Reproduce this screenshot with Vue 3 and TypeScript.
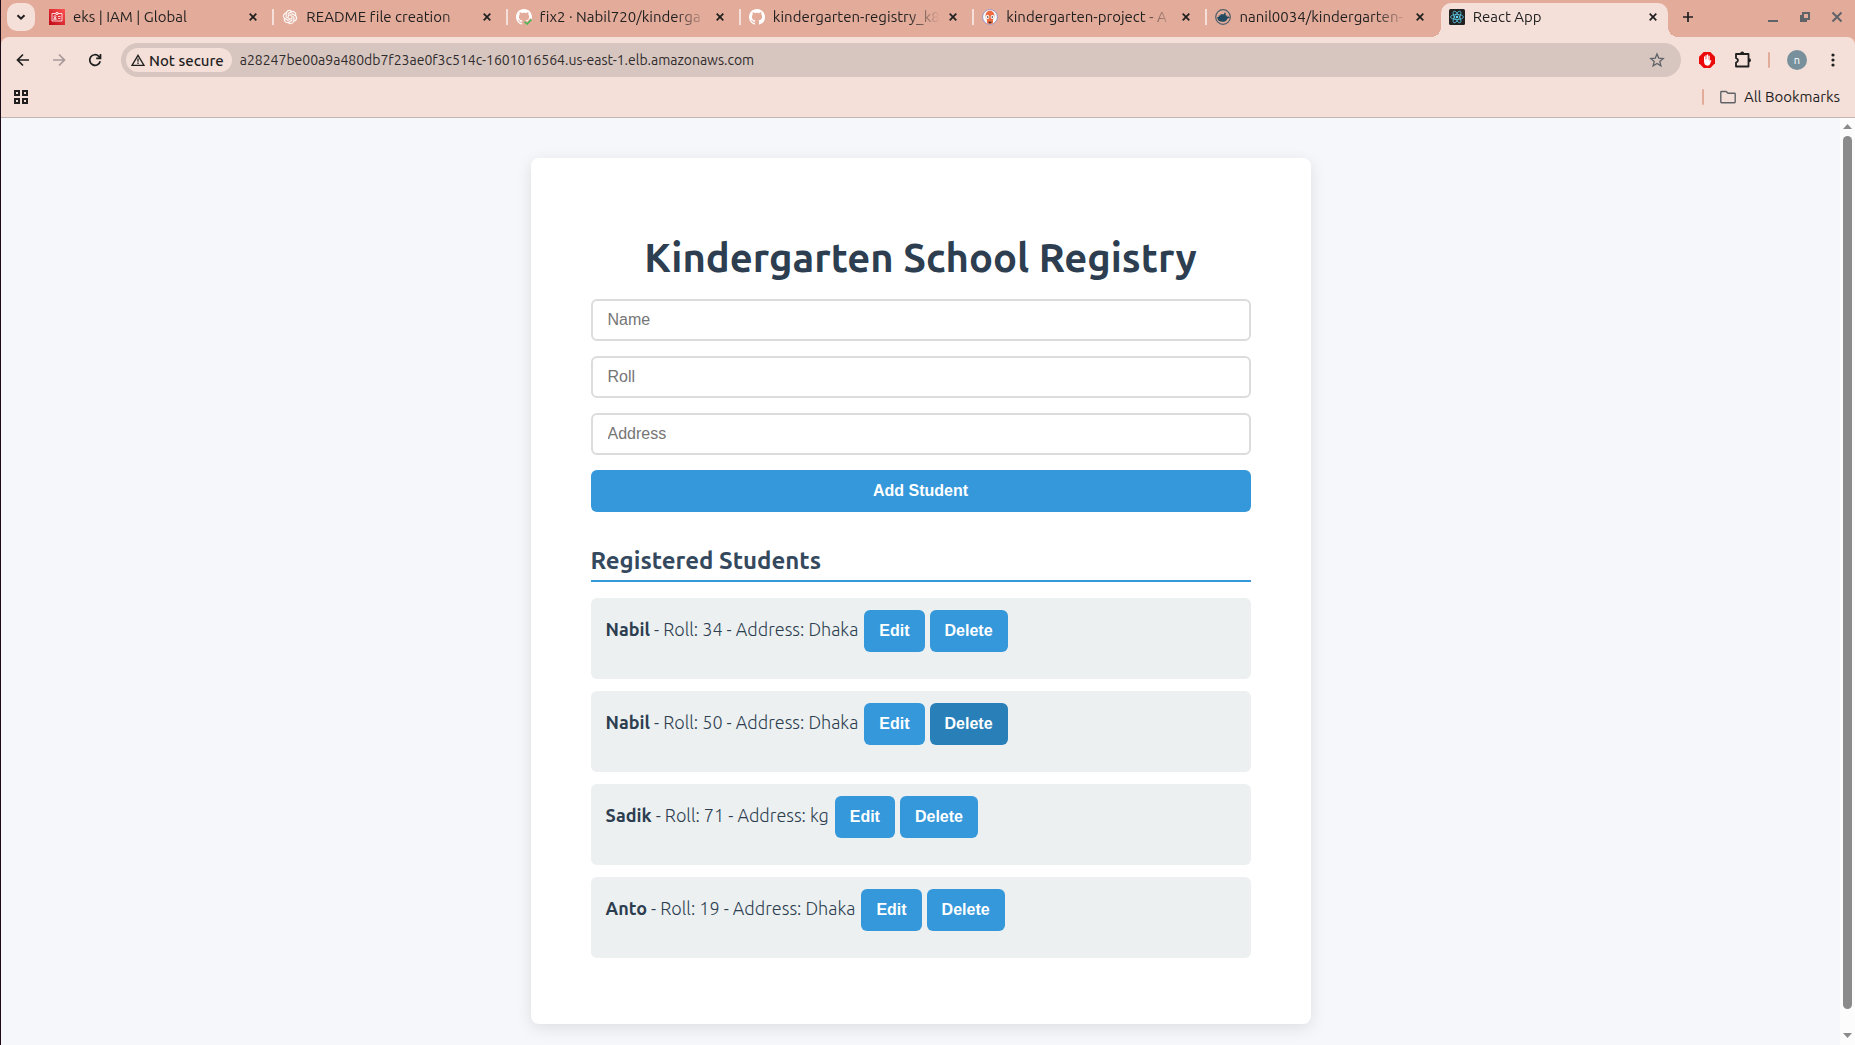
<script setup lang="ts">
import { ref } from 'vue'

interface Tab {
  title: string
  icon: 'iam' | 'openai' | 'github-ok' | 'github' | 'argo' | 'docker' | 'react'
  active?: boolean
}

interface Student {
  name: string
  roll: number
  address: string
  pressed?: boolean
}

const tabs: Tab[] = [
  { title: 'eks | IAM | Global', icon: 'iam' },
  { title: 'README file creation', icon: 'openai' },
  { title: 'fix2 · Nabil720/kinderga', icon: 'github-ok' },
  { title: 'kindergarten-registry_k8', icon: 'github' },
  { title: 'kindergarten-project - A', icon: 'argo' },
  { title: 'nanil0034/kindergarten-', icon: 'docker' },
  { title: 'React App', icon: 'react', active: true },
]

const url = ref('a28247be00a9a480db7f23ae0f3c514c-1601016564.us-east-1.elb.amazonaws.com')
const name = ref('')
const roll = ref('')
const address = ref('')

const students = ref<Student[]>([
  { name: 'Nabil', roll: 34, address: 'Dhaka' },
  { name: 'Nabil', roll: 50, address: 'Dhaka', pressed: true },
  { name: 'Sadik', roll: 71, address: 'kg' },
  { name: 'Anto', roll: 19, address: 'Dhaka' },
])

const octocat =
  'M8 0C3.58 0 0 3.58 0 8c0 3.54 2.29 6.53 5.47 7.59.4.07.55-.17.55-.38 0-.19-.01-.82-.01-1.49-2.01.37-2.53-.49-2.69-.94-.09-.23-.48-.94-.82-1.13-.28-.15-.68-.52-.01-.53.63-.01 1.08.58 1.23.82.72 1.21 1.87.87 2.33.66.07-.52.28-.87.51-1.07-1.78-.2-3.64-.89-3.64-3.95 0-.87.31-1.59.82-2.15-.08-.2-.36-1.02.08-2.12 0 0 .67-.21 2.2.82.64-.18 1.32-.27 2-.27.68 0 1.36.09 2 .27 1.53-1.04 2.2-.82 2.2-.82.44 1.1.16 1.92.08 2.12.51.56.82 1.27.82 2.15 0 3.07-1.87 3.75-3.65 3.95.29.25.54.73.54 1.48 0 1.07-.01 1.93-.01 2.2 0 .21.15.46.55.38A8.013 8.013 0 0016 8c0-4.42-3.58-8-8-8z'
const knot =
  'M22.2819 9.8211a5.9847 5.9847 0 0 0-.5157-4.9108 6.0462 6.0462 0 0 0-6.5098-2.9A6.0651 6.0651 0 0 0 4.9807 4.1818a5.9847 5.9847 0 0 0-3.9977 2.9 6.0462 6.0462 0 0 0 .7427 7.0966 5.98 5.98 0 0 0 .511 4.9107 6.051 6.051 0 0 0 6.5146 2.9001A5.9847 5.9847 0 0 0 13.2599 24a6.0557 6.0557 0 0 0 5.7718-4.2058 5.9894 5.9894 0 0 0 3.9977-2.9001 6.0557 6.0557 0 0 0-.7475-7.0729zm-9.022 12.6081a4.4755 4.4755 0 0 1-2.8764-1.0408l.1419-.0804 4.7783-2.7582a.7948.7948 0 0 0 .3927-.6813v-6.7369l2.02 1.1686a.071.071 0 0 1 .038.052v5.5826a4.504 4.504 0 0 1-4.4945 4.4944zm-9.6607-4.1254a4.4708 4.4708 0 0 1-.5346-3.0137l.142.0852 4.783 2.7582a.7712.7712 0 0 0 .7806 0l5.8428-3.3685v2.3324a.0804.0804 0 0 1-.0332.0615L9.74 19.9502a4.4992 4.4992 0 0 1-6.1408-1.6464zM2.3408 7.8956a4.485 4.485 0 0 1 2.3655-1.9728V11.6a.7664.7664 0 0 0 .3879.6765l5.8144 3.3543-2.0201 1.1685a.0757.0757 0 0 1-.071 0l-4.8303-2.7865A4.504 4.504 0 0 1 2.3408 7.872zm16.5963 3.8558L13.1038 8.364 15.1192 7.2a.0757.0757 0 0 1 .071 0l4.8303 2.7913a4.4944 4.4944 0 0 1-.6765 8.1042v-5.6772a.79.79 0 0 0-.407-.667zm2.0107-3.0231l-.142-.0852-4.7735-2.7818a.7759.7759 0 0 0-.7854 0L9.409 9.2297V6.8974a.0662.0662 0 0 1 .0284-.0615l4.8303-2.7866a4.4992 4.4992 0 0 1 6.6802 4.66zM8.3065 12.863l-2.02-1.1638a.0804.0804 0 0 1-.038-.0567V6.0742a4.4992 4.4992 0 0 1 7.3757-3.4537l-.142.0805L8.704 5.459a.7948.7948 0 0 0-.3927.6813zm1.0976-2.3654l2.602-1.4998 2.6069 1.4998v2.9994l-2.5974 1.4997-2.6067-1.4997Z'
</script>

<template>
  <div class="window">
    <header class="strip">
      <button class="tab-search" aria-label="Search tabs">
        <svg width="12" height="12" viewBox="0 0 12 12"><path d="M2.5 4.2 6 7.7l3.5-3.5" fill="none" stroke="#1f1f1f" stroke-width="2" /></svg>
      </button>
      <nav class="tabs">
        <div v-for="tab in tabs" :key="tab.title" class="tab" :class="{ active: tab.active }">
          <svg v-if="tab.icon === 'iam'" class="fav" viewBox="0 0 16 16">
            <defs><linearGradient id="iam" x1="0" y1="1" x2="1" y2="0"><stop offset="0" stop-color="#bd0816" /><stop offset="1" stop-color="#ff5252" /></linearGradient></defs>
            <rect width="16" height="16" fill="url(#iam)" />
            <path d="M7 4.5H3V12h10V4.5H9M7 3.5h2v2H7zM9 7.5h2.5M9 9.5h2.5M4.5 10.3c0-1.6 3-1.6 3 0z" fill="none" stroke="#fff" stroke-width=".8" />
            <circle cx="6" cy="7.600" r="1" fill="none" stroke="#fff" stroke-width=".8" />
          </svg>
          <svg v-else-if="tab.icon === 'openai'" class="fav" viewBox="0 0 24 24">
            <path :d="knot" fill="#fff" stroke="#fff" stroke-width=".4" transform="translate(1.5 1.5) scale(.88)" />
          </svg>
          <svg v-else-if="tab.icon === 'github-ok'" class="fav" viewBox="0 0 16 16">
            <path :d="octocat" fill="#fff" />
            <path d="m8.5 12.7 2.6 2.6 4.7-4.8" fill="none" stroke="#e3ab9a" stroke-width="4" />
            <path d="m8.5 12.7 2.6 2.3 4.4-4.6" fill="none" stroke="#3fb950" stroke-width="1.5" />
          </svg>
          <svg v-else-if="tab.icon === 'github'" class="fav" viewBox="0 0 16 16"><path :d="octocat" fill="#fff" /></svg>
          <svg v-else-if="tab.icon === 'argo'" class="fav" viewBox="0 0 16 16">
            <circle cx="8" cy="8" r="7.400" fill="#fff" stroke="#8f8fc4" stroke-width=".9" />
            <path d="M3.5 7.2C3.5 0 12.5 0 12.5 7.2q0 2.300-1.500 3.600v3.400q-3 1.600-6 0v-3.400Q3.500 9.500 3.500 7.200z" fill="#ef6b42" />
            <circle cx="5.500" cy="8" r="1.900" fill="#fff" /><circle cx="10.500" cy="8" r="1.900" fill="#fff" />
            <circle cx="5.700" cy="8" r=".8" fill="#222" /><circle cx="10.300" cy="8" r=".8" fill="#222" />
            <path d="M6.300 12.800h3.400q-.3 1.600-1.700 1.600t-1.700-1.600z" fill="#333" />
          </svg>
          <svg v-else-if="tab.icon === 'docker'" class="fav" viewBox="0 0 16 16">
            <circle cx="8" cy="8" r="7.300" fill="none" stroke="#4d5d68" stroke-width="1.200" />
            <path d="M2.200 8h1.500V6.600h1.700V5.200h3.800V3.800h1.500v2.800h1.200V8c.6 0 .8-.3.800-1.500 1 .5 1 1.200.8 1.500.6-.1 1 0 1.300.2-.5.9-1.100 1-2 1-1 2.500-2.700 3.600-5.300 3.600-3.300 0-5.200-1.500-5.300-4.800z" fill="#234a61" />
          </svg>
          <svg v-else class="fav" viewBox="0 0 16 16">
            <rect width="16" height="16" rx="1.500" fill="#222" />
            <g fill="none" stroke="#61dafb" stroke-width=".7">
              <ellipse cx="8" cy="8" rx="6.500" ry="2.500" />
              <ellipse cx="8" cy="8" rx="6.500" ry="2.500" transform="rotate(60 8 8)" />
              <ellipse cx="8" cy="8" rx="6.500" ry="2.500" transform="rotate(120 8 8)" />
            </g>
            <circle cx="8" cy="8" r="1.300" fill="#61dafb" />
          </svg>
          <span class="tab-title">{{ tab.title }}</span>
          <button class="tab-close" :aria-label="`Close ${tab.title}`">
            <svg width="8" height="8" viewBox="0 0 8 8"><path d="m.7.7 6.600 6.600m0-6.600L.7 7.300" stroke="#1f1f1f" stroke-width="1.700" /></svg>
          </button>
        </div>
      </nav>
      <button class="new-tab" aria-label="New tab">
        <svg width="12" height="12" viewBox="0 0 12 12"><path d="M6 1v10M1 6h10" stroke="#1f1f1f" stroke-width="1.700" /></svg>
      </button>
      <div class="controls">
        <button aria-label="Minimize"><svg width="12" height="12" viewBox="0 0 12 12"><path d="M1 10h10" stroke="#5f6368" stroke-width="2" /></svg></button>
        <button aria-label="Restore"><svg width="12" height="12" viewBox="0 0 12 12"><path d="M4 2h6v6H4zM2 4v6h6" fill="none" stroke="#5f6368" stroke-width="2" /></svg></button>
        <button aria-label="Close window"><svg width="12" height="12" viewBox="0 0 12 12"><path d="m1.500 1.500 9 9m0-9-9 9" stroke="#5f6368" stroke-width="2" /></svg></button>
      </div>
    </header>

    <section class="toolbar">
      <button class="tool" aria-label="Back"><svg width="16" height="16" viewBox="0 0 16 16"><path d="M14 8H3M8 2.500 2.500 8 8 13.500" fill="none" stroke="#1f1f1f" stroke-width="1.700" /></svg></button>
      <button class="tool" aria-label="Forward"><svg width="16" height="16" viewBox="0 0 16 16"><path d="M2 8h11M8 2.500 13.500 8 8 13.500" fill="none" stroke="#a8989a" stroke-width="1.700" /></svg></button>
      <button class="tool" aria-label="Reload"><svg width="16" height="16" viewBox="0 0 16 16"><path d="M13.200 9.200a5.300 5.300 0 1 1-1.400-4.900l1.500 1.500M13.500 2v4.300H9.200" fill="none" stroke="#1f1f1f" stroke-width="1.700" /></svg></button>
      <div class="omnibox">
        <button class="chip">
          <svg width="14" height="12" viewBox="0 0 14 12"><path d="M7 1.300 13 11.300H1z" fill="none" stroke="#1f1f1f" stroke-width="1.300" /><path d="M7 4.500v3.300M7 8.600v1.300" stroke="#1f1f1f" stroke-width="1.300" /></svg>
          Not secure
        </button>
        <input v-model="url" class="url" aria-label="Address and search bar" spellcheck="false" />
        <button class="star" aria-label="Bookmark this tab"><svg width="16" height="16" viewBox="0 0 16 16"><path d="m8 1.900 1.700 4.200 4.500.4-3.400 2.900 1.100 4.400L8 11.400l-3.900 2.400 1.100-4.400-3.400-2.900 4.500-.4z" fill="none" stroke="#5f6368" stroke-width="1.300" /></svg></button>
      </div>
      <div class="extensions">
        <button class="tool" aria-label="Ad blocker">
          <svg width="16" height="16" viewBox="0 0 16 16"><path d="M4.700 0h6.600L16 4.700v6.600L11.300 16H4.700L0 11.300V4.700z" fill="#ea0a0a" /><path d="M5 9V5q0-.7.6-.7t.6.7v2.500h.3V3.700q0-.7.600-.7t.600.7v3.600H8V3q0-.7.600-.7t.600.7v4.400h.3V4.200q0-.7.600-.7t.600.7v5l.7-1q.6-.6 1 0l-1.200 3.500q-.7 2-2.700 2Q5 13.600 5 9z" fill="#fff" /></svg>
        </button>
        <button class="tool" aria-label="Extensions">
          <svg width="18" height="18" viewBox="0 0 18 18"><path d="M3 3h12.500v12.500H3v-4q2-.6 2-2.200t-2-2.200z" fill="none" stroke="#1f1f1f" stroke-width="1.800" stroke-linejoin="round" /><path d="M7.200 2.600a2 2 0 0 1 4 0zM16 7.300a2 2 0 0 1 0 4z" fill="#1f1f1f" /></svg>
        </button>
        <span class="rule"></span>
        <button class="avatar" aria-label="Profile">n</button>
        <button class="tool menu" aria-label="Menu"><svg width="4" height="16" viewBox="0 0 4 16" fill="#1f1f1f"><circle cx="2" cy="3" r="1.600" /><circle cx="2" cy="8" r="1.600" /><circle cx="2" cy="13" r="1.600" /></svg></button>
      </div>
    </section>

    <section class="bookmarks">
      <button class="apps" aria-label="Apps">
        <svg width="14" height="14" viewBox="0 0 14 14"><path d="M1 1h4v4H1zM9 1h4v4H9zM1 9h4v4H1zM9 9h4v4H9z" fill="none" stroke="#1f1f1f" stroke-width="2" /></svg>
      </button>
      <span class="rule"></span>
      <button class="all-bookmarks">
        <svg width="16" height="14" viewBox="0 0 16 14"><path d="M.8 2.500V12q0 .7.7.7h13q.7 0 .7-.7V4q0-.7-.7-.7H8L6.200 1.500H1.500q-.7 0-.7.700z" fill="none" stroke="#5f6368" stroke-width="1.400" /></svg>
        All Bookmarks
      </button>
    </section>

    <div class="viewport">
      <main class="page">
        <div class="card">
          <h1>Kindergarten School Registry</h1>
          <form class="form" @submit.prevent>
            <input v-model="name" type="text" placeholder="Name" aria-label="Name" />
            <input v-model="roll" type="text" placeholder="Roll" aria-label="Roll" />
            <input v-model="address" type="text" placeholder="Address" aria-label="Address" />
            <button class="btn" type="submit">Add Student</button>
          </form>
          <h2>Registered Students</h2>
          <ul class="list">
            <li v-for="s in students" :key="s.roll">
              <span class="info"><strong>{{ s.name }}</strong> - Roll: {{ s.roll }} - Address: {{ s.address }}</span>
              <div class="actions">
                <button class="btn">Edit</button>
                <button class="btn" :class="{ pressed: s.pressed }">Delete</button>
              </div>
            </li>
          </ul>
        </div>
      </main>
      <div class="scrollbar" aria-hidden="true">
        <svg width="9" height="5" viewBox="0 0 9 5"><path d="M4.500 0 9 5H0z" fill="#8b8b8b" /></svg>
        <div class="thumb"></div>
        <svg class="down" width="9" height="5" viewBox="0 0 9 5"><path d="M0 0h9L4.500 5z" fill="#8b8b8b" /></svg>
      </div>
    </div>
  </div>
</template>

<style>
body {
  margin: 0;
  background: #f5f7fb;
}
</style>

<style scoped>
* {
  box-sizing: border-box;
}
button {
  border: 0;
  padding: 0;
  margin: 0;
  background: none;
  font: inherit;
  color: inherit;
}
svg {
  display: block;
  flex: none;
}
.window {
  display: flex;
  flex-direction: column;
  min-height: 100vh;
  border-left: 1px solid #1c0a14;
  font-family: Ubuntu, "Noto Sans", "Open Sans", sans-serif;
  font-size: 15px;
  font-variant-ligatures: none;
  color: #1f1f1f;
  background: #e3ab9a;
}

/* tab strip */
.strip {
  display: flex;
  align-items: flex-start;
  height: 37px;
  padding: 3px 12px 0 6px;
}
.tab-search {
  display: grid;
  place-items: center;
  flex: none;
  width: 28px;
  height: 28px;
  margin-right: 6px;
  border-radius: 10px;
  background: #f5e0d9;
}
.tabs {
  display: flex;
  flex: 0 1 1633px;
  min-width: 0;
}
.tab {
  position: relative;
  display: flex;
  align-items: center;
  flex: 1 1 0;
  min-width: 0;
  height: 34px;
  padding: 0 15px 6px 8px;
}
.tab:not(.active):not(:nth-last-child(2))::after {
  content: "";
  position: absolute;
  right: 0;
  top: 6px;
  width: 2px;
  height: 16px;
  background: #f5e0d9;
}
.tab.active {
  margin-right: 6px;
  padding-right: 9px;
  border-radius: 10px 10px 0 0;
  background: #f5e0d9;
}
.tab.active::before,
.tab.active::after {
  content: "";
  position: absolute;
  bottom: 0;
  width: 10px;
  height: 10px;
}
.tab.active::before {
  left: -10px;
  background: radial-gradient(circle at 0 0, transparent 10px, #f5e0d9 10px);
}
.tab.active::after {
  right: -10px;
  background: radial-gradient(circle at 100% 0, transparent 10px, #f5e0d9 10px);
}
.fav {
  width: 16px;
  height: 16px;
}
.tab-title {
  flex: 1;
  min-width: 0;
  margin: 0 7px 0 8px;
  overflow: hidden;
  white-space: nowrap;
  line-height: 20px;
  -webkit-mask-image: linear-gradient(to left, transparent, #000 32px);
  mask-image: linear-gradient(to left, transparent, #000 32px);
}
.tab-close {
  display: grid;
  place-items: center;
  width: 12px;
  height: 20px;
}
.new-tab {
  display: grid;
  place-items: center;
  width: 28px;
  height: 28px;
}
.controls {
  display: flex;
  align-items: center;
  gap: 20px;
  height: 28px;
  margin-left: auto;
}

/* toolbar */
.toolbar {
  display: flex;
  align-items: center;
  height: 46px;
  padding: 0 13px 0 14px;
  border-radius: 8px 8px 0 0;
  background: #f5e0d9;
}
.tool {
  display: grid;
  place-items: center;
  width: 18px;
  height: 28px;
}
.toolbar > .tool {
  width: 16px;
  margin-right: 20px;
}
.omnibox {
  display: flex;
  align-items: center;
  flex: 1;
  min-width: 0;
  height: 34px;
  margin-left: -2px;
  padding: 0 16px 0 5px;
  border-radius: 17px;
  background: #d7c6bf;
}
.chip {
  display: flex;
  align-items: center;
  flex: none;
  gap: 4px;
  height: 24px;
  padding: 0 8px 0 5px;
  border-radius: 12px;
  background: #f5e0d9;
  font-weight: 500;
}
.url {
  flex: 1;
  min-width: 0;
  margin-left: 8px;
  padding: 0;
  border: 0;
  outline: 0;
  background: none;
  font: inherit;
  font-size: 14px;
  color: #2f2b2d;
}
.extensions {
  display: flex;
  align-items: center;
  gap: 17px;
  margin-left: 17px;
}
.rule {
  width: 2px;
  height: 16px;
  border-radius: 1px;
  background: #e3ab9a;
}
.avatar {
  width: 20px;
  height: 20px;
  border-radius: 50%;
  background: #78909c;
  color: #fff;
  font-size: 11px;
  line-height: 20px;
}

/* bookmarks bar */
.bookmarks {
  display: flex;
  align-items: center;
  height: 35px;
  padding: 0 15px 7px 13px;
  border-bottom: 1px solid #c5b4b4;
  background: #f5e0d9;
}
.bookmarks .rule {
  margin: 0 16px 0 auto;
}
.all-bookmarks {
  display: flex;
  align-items: center;
  gap: 8px;
}

/* page */
.viewport {
  display: flex;
  flex: 1;
  background: #f5f7fb;
}
.page {
  flex: 1;
  min-width: 0;
  padding: 40px 20px 20px;
}
.card {
  max-width: 780px;
  margin: 0 auto;
  padding: 73px 60px 66px;
  border-radius: 8px;
  background: #fff;
  box-shadow: 0 4px 16px rgba(0, 0, 0, 0.1);
}
h1 {
  margin: 0 0 14px;
  font-size: 40px;
  line-height: 54px;
  font-weight: 600;
  text-align: center;
  color: #2c3e50;
}
.form {
  display: flex;
  flex-direction: column;
  gap: 15px;
}
.form input {
  height: 42px;
  padding: 10px 15px;
  border: 2px solid #dcdcdc;
  border-radius: 6px;
  outline: 0;
  background: #fff;
  font: 16px/18px "Liberation Sans", Arial, sans-serif;
}
.form input::placeholder {
  color: #757575;
}
.btn {
  height: 42px;
  padding: 12px 15px;
  border-radius: 6px;
  background: #3498db;
  color: #fff;
  font: bold 16px/18px "Liberation Sans", Arial, sans-serif;
}
.btn.pressed {
  background: #2980b9;
}
h2 {
  margin: 32px 0 16px;
  padding-bottom: 3px;
  border-bottom: 2px solid #3498db;
  font-size: 24px;
  line-height: 33px;
  font-weight: 600;
  color: #34495e;
}
.list {
  display: flex;
  flex-direction: column;
  gap: 12px;
  margin: 0;
  padding: 0;
  list-style: none;
}
li {
  display: flex;
  gap: 6px;
  padding: 12px 15px 27px;
  border-radius: 6px;
  background: #ecf0f1;
  color: #2c3e50;
}
.info {
  font-size: 18px;
  font-weight: 350;
  line-height: 38px;
}
.info strong {
  font-weight: 600;
}
.actions {
  display: flex;
  gap: 5px;
}

/* scrollbar */
.scrollbar {
  display: flex;
  flex-direction: column;
  align-items: center;
  flex: none;
  width: 15px;
  padding: 6px 0 7px;
  background: #fcfcfc;
}
.thumb {
  flex: 1;
  width: 9px;
  margin: 7px 0 24px;
  border-radius: 5px;
  background: #8b8b8b;
}
</style>
